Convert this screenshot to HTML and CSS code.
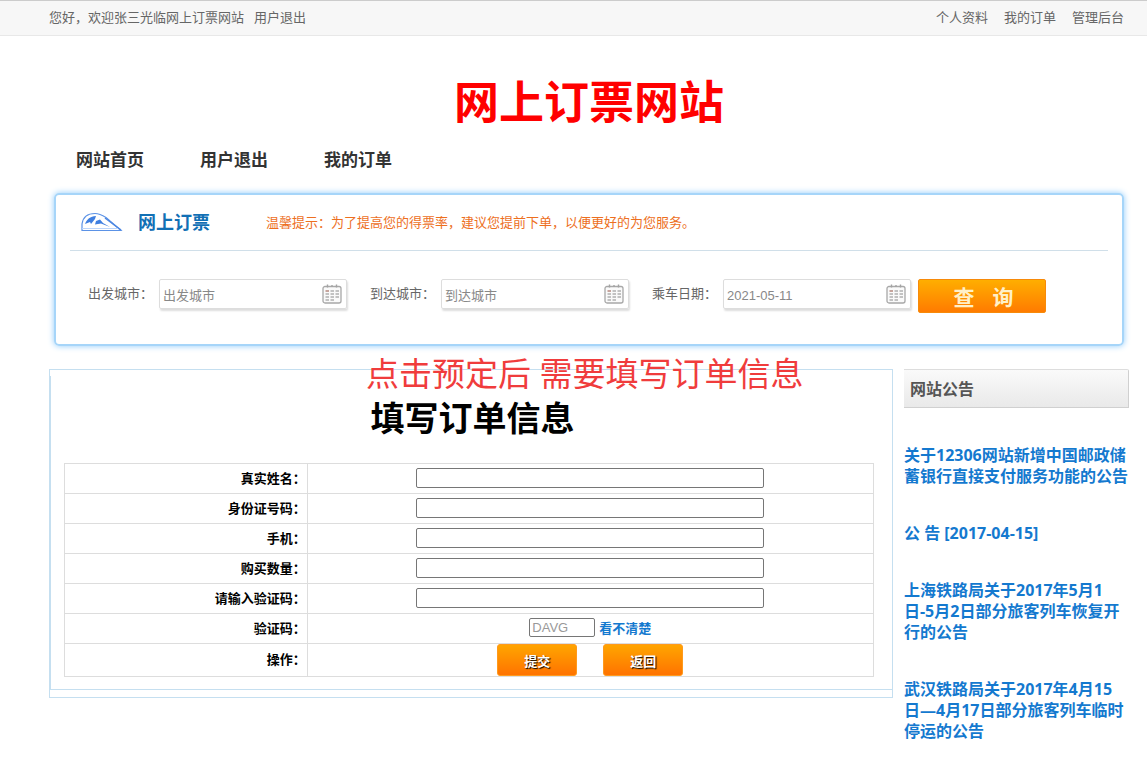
FILE: index.html
```html
<!DOCTYPE html>
<html lang="zh-CN">
<head>
<meta charset="utf-8">
<title>网上订票网站</title>
<link rel="stylesheet" href="styles.css">
</head>
<body>
<svg class="defs" aria-hidden="true">
  <symbol id="calendar" viewBox="0 0 20 20">
    <rect x="1" y="2.500" width="18" height="16.500" rx="2" fill="#fafafa" stroke="#a8a8a8" stroke-width="1.300"/>
    <path d="M5.500 0.500v3M10 1v2M14.500 0.500v3" stroke="#a3a3a3" stroke-width="1.400"/>
    <path d="M3.500 7h3.500" stroke="#b98f85" stroke-width="1.600"/>
    <path d="M8.500 7h3.500M13.500 7h3.500M3.500 10h3.500M8.500 10h3.500M13.500 10h3.500M3.500 13h3.500M8.500 13h3.500M13.500 13h3.500M3.500 16h3.500M8.500 16h3.500" stroke="#b0b0b0" stroke-width="1.400"/>
  </symbol>
</svg>

<header class="topbar">
  <div class="topbar-group topbar-left"><span>您好，欢迎张三光临网上订票网站</span><a href="#">用户退出</a></div>
  <div class="topbar-group topbar-right"><a href="#">个人资料</a><a href="#">我的订单</a><a href="#">管理后台</a></div>
</header>

<div class="page">
  <h1 class="site-title">网上订票网站</h1>
  <nav class="nav">
    <a href="#">网站首页</a><a href="#">用户退出</a><a href="#">我的订单</a>
  </nav>

  <section class="search">
    <div class="search-head">
      <svg class="train" viewBox="0 0 42 20" aria-hidden="true">
        <path d="M1 18.500V12C2 5 7 1.500 14 1.500C18 1.500 21 3 25 5.500L40 18.500Z" fill="#fff" stroke="#5b92e6" stroke-width="1.200"/>
        <path d="M4 12C6 7 9 4.500 15 4L14 7L10 12L9 10Z" fill="#3f7fe0"/>
        <path d="M15 9L19 7.500L22 11L29 15L20 11.500L14 12.500Z" fill="#3f7fe0"/>
        <path d="M24 6L40 18" stroke="#4b86e2" stroke-width="1.500"/>
        <path d="M1 16.500H37" stroke="#bcd5fa"/>
      </svg>
      <h2>网上订票</h2>
      <p>温馨提示：为了提高您的得票率，建议您提前下单，以便更好的为您服务。</p>
    </div>
    <form class="search-form">
      <div class="field">
        <label for="from">出发城市：</label>
        <div class="picker"><input id="from" type="text" placeholder="出发城市"><svg aria-hidden="true"><use href="#calendar"/></svg></div>
      </div>
      <div class="field">
        <label for="to">到达城市：</label>
        <div class="picker"><input id="to" type="text" placeholder="到达城市"><svg aria-hidden="true"><use href="#calendar"/></svg></div>
      </div>
      <div class="field">
        <label for="date">乘车日期：</label>
        <div class="picker"><input id="date" type="text" value="2021-05-11"><svg aria-hidden="true"><use href="#calendar"/></svg></div>
      </div>
      <button class="search-button" type="button"><span>查</span><span>询</span></button>
    </form>
  </section>

  <div class="columns">
    <main class="panel">
      <p class="callout">点击预定后 需要填写订单信息</p>
      <form class="panel-inner">
        <h2>填写订单信息</h2>
        <table>
          <tr><th scope="row"><label for="name">真实姓名：</label></th><td><input class="wide" id="name" type="text"></td></tr>
          <tr><th scope="row"><label for="idno">身份证号码：</label></th><td><input class="wide" id="idno" type="text"></td></tr>
          <tr><th scope="row"><label for="phone">手机：</label></th><td><input class="wide" id="phone" type="text"></td></tr>
          <tr><th scope="row"><label for="count">购买数量：</label></th><td><input class="wide" id="count" type="text"></td></tr>
          <tr><th scope="row"><label for="code">请输入验证码：</label></th><td><input class="wide" id="code" type="text"></td></tr>
          <tr><th scope="row"><label for="captcha">验证码：</label></th><td><div class="cell"><input class="captcha" id="captcha" type="text" value="DAVG"><a href="#">看不清楚</a></div></td></tr>
          <tr><th scope="row">操作：</th><td class="flush"><div class="cell actions"><button type="button">提交</button><button type="button">返回</button></div></td></tr>
        </table>
      </form>
    </main>
    <aside class="notices">
      <h2>网站公告</h2>
      <ul>
        <li><a href="#">关于12306网站新增中国邮政储蓄银行直接支付服务功能的公告</a></li>
        <li><a href="#">公 告 [2017-04-15]</a></li>
        <li><a href="#">上海铁路局关于2017年5月1日-5月2日部分旅客列车恢复开行的公告</a></li>
        <li><a href="#">武汉铁路局关于2017年4月15<br>日—4月17日部分旅客列车临时停运的公告</a></li>
      </ul>
    </aside>
  </div>
</div>
</body>
</html>
```
FILE: styles.css
```css
* { box-sizing: border-box; }
body {
  margin: 0;
  background: #fff;
  color: #666;
  font: 13px/20px "Noto Sans", "Noto Sans CJK SC", sans-serif;
}
h1, h2, p, ul { margin: 0; padding: 0; }
ul { list-style: none; }
a { color: inherit; text-decoration: none; }
input, button { font-family: "Liberation Sans", "Noto Sans CJK SC", sans-serif; font-size: 13px; }
.defs { display: none; }

.topbar {
  display: flex;
  justify-content: space-between;
  height: 36px;
  padding: 6px 23px 0 49px;
  background: #f7f7f7;
  border-top: 1px solid #ccc;
  border-bottom: 1px solid #e8e8e8;
}
.topbar-group { display: flex; }
.topbar-left { gap: 10px; }
.topbar-right { gap: 16px; }

.page { padding: 0 18px 0 49px; }
.site-title {
  padding-top: 34px;
  color: #f00;
  font-size: 45px;
  line-height: 64px;
  text-align: center;
}
.nav {
  display: flex;
  gap: 56px;
  padding: 14px 27px 0;
  color: #333;
  font-size: 17px;
  font-weight: bold;
  line-height: 24px;
}

.search {
  margin: 21px 5px 0;
  padding: 0 14px 31px;
  border: 2px solid #a6d5f9;
  border-radius: 5px;
  box-shadow: 0 0 6px #8fcbfa;
}
.search-head {
  display: flex;
  align-items: center;
  height: 56px;
  padding: 0 0 2px 11px;
  border-bottom: 1px solid #d0dfe9;
}
.train { width: 42px; height: 20px; }
.search-head h2 { margin-left: 15px; color: #1270b5; font-size: 18px; }
.search-head p { margin-left: 56px; color: #ed6f1e; }
.search-form { display: flex; padding: 28px 0 0 18px; }
.field { display: flex; margin-right: 23px; }
.field:nth-of-type(3) { margin-right: 7px; }
.field label { width: 71px; line-height: 28px; white-space: nowrap; }
.picker {
  display: flex;
  align-items: center;
  width: 188px;
  height: 30px;
  padding: 0 4px 0 3px;
  border: 1px solid #ddd;
  border-radius: 2px;
  box-shadow: 1px 2px 2px #ddd;
}
.picker input {
  flex: 1;
  min-width: 0;
  height: 26px;
  padding: 3px 0 0;
  border: 0;
  outline: 0;
  background: none;
  color: #888;
}
.picker input::placeholder { color: #888; opacity: 1; }
.picker svg { width: 20px; height: 20px; }
.search-button {
  display: flex;
  justify-content: center;
  align-items: center;
  gap: 18px;
  width: 128px;
  height: 34px;
  padding: 0 0 0 3px;
  border: 1px solid #f78a0a;
  border-radius: 2px;
  background: linear-gradient(#ffae00, #ff7b00);
  color: #fff0c8;
  font-size: 21px;
  font-weight: bold;
}

.columns { display: flex; align-items: flex-start; gap: 11px; margin-top: 23px; }
.panel {
  position: relative;
  flex: 1;
  padding: 6px 0 7px;
  border: 1px solid #c5dff0;
}
.callout {
  position: absolute;
  top: -20px;
  left: 316px;
  color: #f03c3c;
  font-size: 33px;
  line-height: 48px;
  white-space: nowrap;
}
.panel-inner {
  padding: 18px 18px 12px 13px;
  border-left: 1px solid #c5dff0;
  border-bottom: 1px solid #c5dff0;
}
.panel-inner h2 {
  margin-bottom: 21px;
  padding-left: 7px;
  color: #000;
  font-size: 34px;
  line-height: 48px;
  text-align: center;
}
table { width: 100%; border-collapse: collapse; table-layout: fixed; }
th, td { height: 30px; padding: 0 0 2px; border: 1px solid #ddd; }
th { width: 30%; padding-right: 1px; color: #000; text-align: right; }
td { text-align: center; }
td.flush { padding: 0; }
td input { border: 1px solid #767676; border-radius: 2px; }
.wide { display: block; width: 348px; height: 20px; margin: 0 auto; }
.cell { display: flex; justify-content: center; align-items: center; gap: 4px; }
.captcha { width: 66px; height: 19px; padding: 0 2px; color: #999; }
.cell a { color: #1479cf; font-weight: bold; }
.actions { gap: 26px; }
.actions button {
  width: 80px;
  height: 32px;
  padding: 0;
  border: 1px solid #ff9a1c;
  border-radius: 3px;
  background: linear-gradient(#ffa500, #ff7300);
  color: #fff;
  font-weight: bold;
  text-shadow: 1px 1px 1px #000;
}

.notices { width: 225px; color: #1479cf; font-size: 16px; line-height: 21px; }
.notices h2 {
  height: 39px;
  padding-left: 6px;
  border: 1px solid #d0d0d0;
  border-left: 0;
  border-top-color: #ddd;
  border-radius: 0 2px 0 0;
  background: linear-gradient(#fafafa, #e9e9e9);
  color: #555;
  font-size: 16px;
  line-height: 38px;
}
.notices ul { padding-top: 1px; }
.notices li { margin-bottom: 36px; font-weight: bold; }
.notices li:first-child { margin-top: 36px; }
.notices li:last-child { margin-bottom: 0; }
```
